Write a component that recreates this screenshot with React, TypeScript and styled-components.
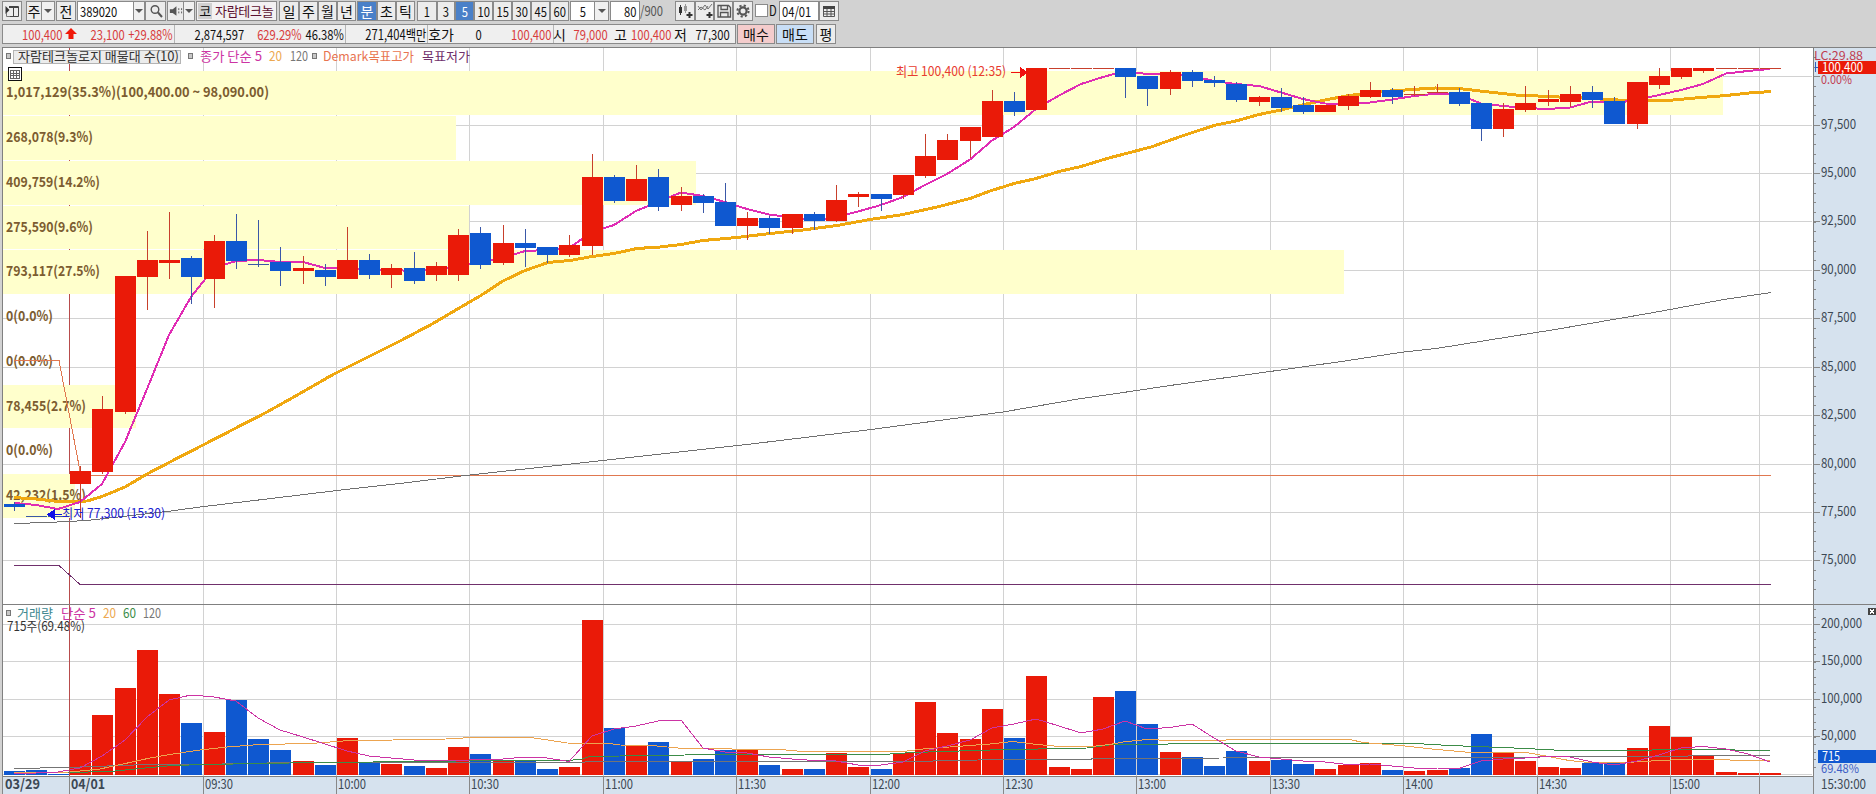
import React from 'react';
import styled, { createGlobalStyle } from 'styled-components';

const fontStack = `'Noto Sans CJK KR', 'Liberation Sans', sans-serif`;

const RED = '#ea1a08';
const BLUE = '#0f58d0';

const GlobalStyle = createGlobalStyle`
  html, body {
    margin: 0;
    padding: 0;
    overflow: hidden;
    background: #d2d2d2;
  }

  * {
    box-sizing: border-box;
  }
`;

const Page = styled.div`
  width: 1876px;
  height: 794px;
  padding-left: 2px;

  display: flex;
  flex-direction: column;

  background: #d2d2d2;
  font-family: ${fontStack};
  font-size: 14px;
  line-height: 18px;
  color: #111;
`;

const Toolbar = styled.div`
  height: 20px;
  margin-top: 1px;

  display: flex;
  align-items: stretch;
`;

const QuoteBar = styled.div`
  height: 20px;
  margin: 3px 0;

  display: flex;
  align-items: stretch;
`;

const Button = styled.div<{ $w: number; $gap?: number; $active?: boolean; $bg?: string }>`
  width: ${p => p.$w}px;
  margin-left: ${p => p.$gap ?? 0}px;

  display: flex;
  flex: none;
  align-items: center;
  justify-content: center;
  white-space: nowrap;

  border: 1px solid #8a8a8a;
  background: ${p => (p.$active ? '#4a80c8' : p.$bg || '#ececec')};
  color: ${p => (p.$active ? '#fff' : '#111')};

  & + & {
    border-left-width: ${p => (p.$gap ? 1 : 0)}px;
  }
`;

// Condensed digits.
const Num = styled.span<{ $origin?: string }>`
  display: inline-block;
  transform: scaleX(0.8);
  transform-origin: ${p => p.$origin || 'center'};
`;

const Input = styled.div<{ $w: number; $gap?: number; $align?: string }>`
  width: ${p => p.$w}px;
  margin-left: ${p => p.$gap ?? 0}px;
  padding: 0 2px;

  display: flex;
  flex: none;
  justify-content: ${p => p.$align || 'flex-start'};
  white-space: nowrap;

  border: 1px solid #8a8a8a;
  background: #fff;
`;

const Arrow = styled.div<{ $w: number }>`
  width: ${p => p.$w}px;

  display: flex;
  flex: none;
  align-items: center;
  justify-content: center;

  border: 1px solid #8a8a8a;
  border-left: none;
  background: #f0f0f0;

  &::after {
    content: '';
    border: 4px solid transparent;
    border-top: 4px solid #555;
    border-bottom: none;
  }
`;

const StockName = styled.div`
  width: 81px;
  margin-left: 1px;
  padding: 0 1px;

  display: flex;
  flex: none;
  align-items: center;
  white-space: nowrap;

  border: 1px solid #8a8a8a;
  background: #f3f1f2;
  color: #5c1030;
  font-size: 13px;
  letter-spacing: -0.3px;
`;

const Market = styled.span`
  width: 14px;
  height: 16px;
  margin-right: 3px;
  line-height: 16px;
  text-align: center;

  background: #d0d0d0;
  color: #111;
`;

const Total = styled.div`
  width: 35px;
  flex: none;
  color: #555;
`;

const CheckBox = styled.div`
  width: 13px;
  height: 13px;
  margin: 3px 1px 0 2px;

  flex: none;
  border: 1px solid #8a8a8a;
  background: #fff;
`;

const CheckLabel = styled.div`
  width: 10px;
  flex: none;
`;

const Quotes = styled.div`
  width: 734px;

  display: flex;
  flex: none;

  border: 1px solid #8a8a8a;
  background: #efefef;
`;

const Quote = styled.div<{ $w: number; $color?: string; $divider?: boolean }>`
  width: ${p => p.$w}px;
  padding-right: ${p => (p.$divider ? 1 : 0)}px;

  display: flex;
  flex: none;
  justify-content: flex-end;
  white-space: nowrap;

  border-right: 1px solid ${p => (p.$divider ? '#b5b5b5' : 'transparent')};
  color: ${p => p.$color || '#111'};
`;

const Workspace = styled.div`
  height: 747px;

  display: grid;
  grid-template-columns: 1811px 63px;
  grid-template-rows: 557px 172px 18px;

  svg {
    display: block;
  }
`;

const ChartText = styled.text<{ $bold?: boolean; $size?: number }>`
  font-family: ${fontStack};
  font-size: ${p => p.$size || 14}px;
  font-weight: ${p => (p.$bold ? 700 : 400)};
  white-space: pre;
`;

// [body top, body bottom, high, low, up, volume top]
type Bar = [number, number, number, number, number, number];

const bars: Bar[] = [
  [504, 507, 502, 511, 0, 771], [516, 517, 516, 517, 0, 770], [516, 517, 516, 517, 0, 774],
  [471, 484, 466, 518, 1, 750], [409, 472, 396, 474, 1, 715], [276, 412, 276, 414, 1, 688],
  [260, 277, 231, 310, 1, 650], [260, 263, 212, 279, 1, 694], [258, 277, 256, 304, 0, 723],
  [241, 279, 235, 308, 1, 732], [241, 261, 214, 269, 0, 700], [264, 265, 220, 267, 0, 739],
  [262, 271, 247, 286, 0, 750], [268, 271, 256, 284, 1, 761], [270, 277, 264, 286, 0, 765],
  [260, 279, 227, 279, 1, 738], [260, 275, 254, 279, 0, 762], [268, 275, 264, 288, 1, 764],
  [268, 281, 252, 284, 0, 766], [266, 275, 262, 281, 1, 768], [235, 275, 229, 281, 1, 747],
  [233, 265, 227, 269, 0, 754], [243, 263, 225, 265, 1, 760], [243, 248, 229, 267, 0, 761],
  [247, 255, 247, 263, 0, 769], [245, 255, 235, 257, 1, 767], [177, 246, 154, 255, 1, 620],
  [177, 201, 175, 203, 0, 728], [179, 201, 165, 201, 1, 746], [177, 207, 169, 211, 0, 742],
  [196, 205, 187, 211, 1, 762], [196, 203, 194, 213, 0, 759], [202, 226, 183, 226, 0, 750],
  [218, 226, 212, 240, 1, 750], [218, 228, 216, 234, 0, 765], [214, 228, 214, 234, 1, 769],
  [214, 221, 212, 230, 0, 769], [200, 221, 185, 222, 1, 753], [194, 197, 192, 207, 1, 767],
  [194, 199, 194, 211, 0, 769], [175, 195, 175, 199, 1, 753], [156, 176, 134, 178, 1, 702],
  [140, 160, 134, 160, 1, 733], [127, 141, 127, 158, 1, 739], [101, 137, 90, 137, 1, 709],
  [101, 112, 92, 116, 0, 738], [68, 110, 68, 110, 1, 676], [68, 69, 68, 69, 1, 767],
  [68, 69, 68, 69, 1, 769], [68, 69, 68, 69, 1, 697], [68, 77, 68, 98, 0, 691],
  [76, 89, 76, 106, 0, 724], [72, 89, 70, 95, 1, 752], [72, 81, 70, 87, 0, 757],
  [80, 83, 76, 87, 0, 766], [84, 100, 82, 102, 0, 751], [97, 102, 96, 106, 1, 761],
  [97, 108, 88, 112, 0, 760], [105, 112, 97, 114, 0, 764], [105, 112, 105, 112, 1, 769],
  [96, 106, 94, 110, 1, 765], [90, 97, 82, 98, 1, 763], [90, 97, 88, 104, 0, 770],
  [94, 95, 86, 96, 1, 771], [92, 93, 84, 93, 1, 770], [92, 104, 88, 106, 0, 768],
  [103, 129, 103, 141, 0, 734], [109, 129, 103, 137, 1, 752], [103, 110, 86, 112, 1, 761],
  [99, 102, 90, 106, 1, 767], [94, 102, 86, 107, 1, 768], [92, 100, 86, 108, 0, 763],
  [101, 124, 97, 124, 0, 763], [82, 124, 82, 129, 1, 748], [76, 85, 68, 89, 1, 726],
  [68, 77, 68, 79, 1, 737], [68, 71, 68, 73, 1, 756], [68, 69, 68, 69, 1, 772],
  [68, 69, 68, 69, 1, 773], [68, 69, 68, 69, 1, 773],
];

const barLeft = (i: number) => Math.floor(4 + i * 22.235);

// One y per bar.
const priceMa5 = [
  503, 505, 509, 502, 484, 442, 389, 335, 297, 268, 261, 260, 262, 262, 268, 268, 270, 270, 271, 270,
  266, 262, 258, 251, 250, 248, 232, 225, 211, 202, 192.5, 196, 202, 209, 214.5, 217.5, 220.5, 217, 211.5, 205,
  197, 185, 174, 159.5, 140.5, 127, 109, 95.5, 84, 77, 71, 74, 74.5, 76, 81, 84, 86, 92.5, 99, 103.5,
  104, 102.5, 99.5, 96, 93.5, 94.5, 103.5, 106, 108, 109, 107.5, 101.5, 103, 100, 95, 90, 84, 73.5, 71, 69,
];

const volumeMa5 = [
  773, 773, 772, 768, 756, 740, 717, 700, 695, 697, 701, 718, 730, 737, 744, 751, 756, 758, 760, 760,
  761, 759, 759, 757, 758, 761.5, 736, 729, 726, 721, 720, 748, 752, 753, 757, 759, 760.5, 761, 765, 765,
  762, 751, 746, 740, 728, 724, 719, 726, 733, 729, 721, 729, 727.5, 724, 738, 751, 757, 759, 761, 762,
  764.5, 764, 766, 768, 768, 768.5, 761, 759, 758, 756.5, 757, 762, 765, 761, 755, 748, 746.5, 749, 754, 762,
];

const perBar = (ys: number[]) => ys.map((y, i) => `${barLeft(i) + 10},${y}`).join(' ');

const priceMa20 =
  '14,497.5 36,499 58,501.5 87,501 102,496.5 125,487 147,474 170,462 204,444.5 233,429.5 267,412 300,393.5 333,374.5 367,357.5 400,341 ' +
  '433,323.5 455,310.5 480,296 490,289.5 503,281 525,270.5 548,262.5 570,260.5 592,256.5 614,253.5 637,248.5 660,247 681,244.5 ' +
  '703,240.5 737,237.5 770,233.5 803,230 837,225.5 870,219.5 903,214.5 937,207 970,198.5 990,191 1014,183.5 1036,178.5 1059,171.5 ' +
  '1081,166.5 1107,158.5 1151,147 1182,136 1214,125.5 1238,120.5 1259,114.5 1281,110 1304,104.5 1325,100 1348,95.7 1380,91.7 ' +
  '1412,89.5 1435,88 1459,88.5 1493,92.5 1516,95 1538,96 1559,97 1582,98 1609,99.5 1626,100.5 1668,100.5 1689,98.5 1726,95.5 1749,93 1771,91.5';

const priceMa120 =
  '14,523.5 47,522.5 87,520.5 167,511.5 204,506.5 267,499 337,490.5 400,483.5 465,475.5 603,460.5 670,453 751,444 871,429.5 ' +
  '1003,412 1080,398.7 1137,390.5 1170,385.5 1270,371.5 1345,361 1400,352.5 1436,348.5 1555,329.5 1651,313 1724,299.5 1771,292.5';

const volumeMa20 =
  '14,772.5 70,772 100,769 123,764 150,758 173,754 200,750 227,747 253,745 317,743 350,740.5 437,739.5 480,737 527,737 548,740 ' +
  '567,743 610,743.5 620,745 657,746 683,748.5 780,749.5 797,751 907,751 923,749 963,746 990,744 1013,741.5 1037,744.5 1060,746.5 ' +
  '1087,747 1110,744.5 1123,742 1147,739.5 1170,740.5 1223,740.5 1230,739.5 1350,739.5 1363,742.5 1400,745.5 1437,749.5 1470,752.5 ' +
  '1529,753 1546,756 1569,760.5 1589,762.5 1626,762.5 1659,760.5 1683,759.5 1716,759.5 1743,760.5 1770,760.5';

const volumeMa60 =
  '14,772.5 67,772.5 110,771.5 140,768.5 167,766 200,764.5 267,763.5 313,762.5 433,761.5 480,760.5 567,760.5 580,759.5 590,756.5 ' +
  '650,755.5 720,754.5 883,754.5 913,752.5 990,750 1087,748 1113,744.5 1223,743.5 1360,743.5 1420,743.8 1450,745.5 1476,746.5 ' +
  '1526,748.5 1563,750.5 1649,750.5 1656,749.5 1726,749.5 1743,750.5 1770,750.5';

const volumeMa120 =
  '14,768.5 67,767.5 140,764.8 200,764.5 267,763 480,762.5 580,762.5 590,761.5 913,761.5 953,760.5 1003,759.5 1090,759.5 1093,758.5 ' +
  '1223,758 1227,757.5 1536,757.5 1540,756.5 1686,756.5 1690,755.5 1770,755.5';

const profile = [
  { top: 71, bottom: 115, right: 1723, text: '1,017,129(35.3%)(100,400.00 ~ 98,090.00)', w: 263, y: 92 },
  { top: 116, bottom: 160, right: 456, text: '268,078(9.3%)', w: 87, y: 137 },
  { top: 161, bottom: 205, right: 696, text: '409,759(14.2%)', w: 94, y: 182 },
  { top: 206, bottom: 249, right: 469, text: '275,590(9.6%)', w: 87, y: 227 },
  { top: 250, bottom: 294, right: 1344, text: '793,117(27.5%)', w: 94, y: 271 },
  { top: 295, bottom: 339, right: 3, text: '0(0.0%)', w: 47, y: 316 },
  { top: 340, bottom: 384, right: 3, text: '0(0.0%)', w: 47, y: 361 },
  { top: 385, bottom: 428, right: 136, text: '78,455(2.7%)', w: 80, y: 406 },
  { top: 429, bottom: 473, right: 3, text: '0(0.0%)', w: 47, y: 450 },
  { top: 474, bottom: 518, right: 75, text: '42,232(1.5%)', w: 80, y: 495 },
];

const priceLevels = [
  { y: 76, text: '' },
  { y: 125, text: '97,500' },
  { y: 173, text: '95,000' },
  { y: 221, text: '92,500' },
  { y: 270, text: '90,000' },
  { y: 318, text: '87,500' },
  { y: 367, text: '85,000' },
  { y: 415, text: '82,500' },
  { y: 464, text: '80,000' },
  { y: 512, text: '77,500' },
  { y: 560, text: '75,000' },
];

const volumeLevels = [
  { y: 624, text: '200,000' },
  { y: 661, text: '150,000' },
  { y: 699, text: '100,000' },
  { y: 736, text: '50,000' },
  { y: 774, text: '' },
];

const times = ['09:30', '10:00', '10:30', '11:00', '11:30', '12:00', '12:30', '13:00', '13:30', '14:00', '14:30', '15:00'];
const timeX = times.map((_, n) => barLeft(9 + n * 6) - 1);
const verticals = [...timeX, 1759];

interface LabelProps {
  x: number;
  y: number;
  w: number;
  fill: string;
  bold?: boolean;
  size?: number;
  children: string;
}

// Text centred vertically on y and fitted to w.
function Label({ x, y, w, fill, bold, size, children }: LabelProps) {
  return (
    <ChartText
      x={x}
      y={y + 5}
      fill={fill}
      textLength={w}
      lengthAdjust="spacingAndGlyphs"
      $bold={bold}
      $size={size}
    >
      {children}
    </ChartText>
  );
}

function Marker({ x, y }: { x: number; y: number }) {
  return <rect x={x + 0.5} y={y + 0.5} width={4} height={5} fill="#c8c8c8" stroke="#777" />;
}

function Line({ points, color, width = 1 }: { points: string; color: string; width?: number }) {
  return <polyline points={points} fill="none" stroke={color} strokeWidth={width} />;
}

function Candle({ bar, index }: { bar: Bar; index: number }) {
  const [top, bottom, high, low, up] = bar;
  const x = barLeft(index);
  const thin = bottom - top === 1;
  const wick = up ? '#c8402c' : '#3a58a8';

  return (
    <g>
      {low - high > 1 && <rect x={x + 10} y={high} width={1} height={low - high} fill={wick} />}
      <rect x={x} y={top} width={21} height={bottom - top} fill={thin ? wick : up ? RED : BLUE} />
    </g>
  );
}

function PricePane() {
  return (
    <svg width={1811} height={557} viewBox="2 47 1811 557" shapeRendering="crispEdges">
      <rect x={2} y={47} width={1811} height={557} fill="#fff" />
      {priceLevels.map(l => <rect key={l.y} x={3} y={l.y} width={1809} height={1} fill="#d2d2d2" />)}
      {verticals.map(x => <rect key={x} x={x} y={48} width={1} height={556} fill="#d2d2d2" />)}
      <rect x={69} y={48} width={1} height={556} fill="#b84c4c" />
      {profile.map(b => (
        <rect key={b.top} x={3} y={b.top} width={b.right - 3} height={b.bottom - b.top} fill="#ffffcc" />
      ))}
      <rect x={2} y={47} width={1811} height={1} fill="#808080" />
      <rect x={2} y={47} width={1} height={557} fill="#808080" />

      {profile.map(b => (
        <Label key={b.top} x={6} y={b.y} w={b.w} fill="#7c5c30" size={14} bold>{b.text}</Label>
      ))}

      <Line points="14,565.5 59,565.5 80,584.5 1771,584.5" color="#70306c" />
      <Line points="14,360.5 59,360.5 80,471" color="#e07850" />
      <Line points="91,475.5 1771,475.5" color="#e07850" />
      <Line points={priceMa120} color="#707070" />
      <Line points={priceMa20} color="#f0a810" width={3} />
      <Line points={perBar(priceMa5)} color="#e02cb4" width={2} />
      {bars.map((bar, i) => <Candle key={i} bar={bar} index={i} />)}

      <Label x={896} y={71} w={110} fill="#e83c30" size={13}>최고 100,400 (12:35)</Label>
      <path d="M1011 72.5H1022" stroke="#f01010" />
      <path d="M1020 67L1028 72.5L1020 78Z" fill="#f01010" />
      <Label x={62} y={513} w={103} fill="#2020d0" size={13}>최저 77,300 (15:30)</Label>
      <path d="M52 514.5H62" stroke="#1010e8" />
      <path d="M55 509L47 514.5L55 520Z" fill="#1010e8" />

      <Marker x={6} y={53} />
      <rect x={13.5} y={50.5} width={167} height={13} fill="#ececec" stroke="#b4b4b4" />
      <Label x={18} y={56} w={161} fill="#333" size={13}>자람테크놀로지 매물대 수(10)</Label>
      <Marker x={188} y={53} />
      <Label x={200} y={56} w={62} fill="#cc34a4" size={13}>종가 단순 5</Label>
      <Label x={269} y={56} w={13} fill="#eca850">20</Label>
      <Label x={290} y={56} w={18} fill="#777">120</Label>
      <Marker x={312} y={53} />
      <Label x={323} y={56} w={91} fill="#e87450" size={13}>Demark목표고가</Label>
      <Label x={422} y={56} w={48} fill="#70306c" size={13}>목표저가</Label>

      <rect x={8.5} y={67.5} width={13} height={13} fill="#fff" stroke="#111" />
      <path d="M10.5 70.5H19.5V78.5H10.5ZM10.5 73.5H19.5M10.5 75.5H19.5M13.5 70V78M16.5 70V78" fill="none" stroke="#666" />
    </svg>
  );
}

function VolumePane() {
  return (
    <svg width={1811} height={172} viewBox="2 604 1811 172" shapeRendering="crispEdges">
      <rect x={2} y={604} width={1811} height={172} fill="#fff" />
      {volumeLevels.map(l => <rect key={l.y} x={3} y={l.y} width={1809} height={1} fill="#d2d2d2" />)}
      {verticals.map(x => <rect key={x} x={x} y={604} width={1} height={172} fill="#d2d2d2" />)}
      <rect x={2} y={604} width={1811} height={1} fill="#808080" />
      <rect x={2} y={604} width={1} height={172} fill="#808080" />

      {bars.map((bar, i) => (
        <rect key={i} x={barLeft(i)} y={bar[5]} width={21} height={775 - bar[5]} fill={bar[4] ? RED : BLUE} />
      ))}
      <Line points={volumeMa120} color="#747474" />
      <Line points={volumeMa60} color="#3c8c48" />
      <Line points={volumeMa20} color="#eca450" />
      <Line points={perBar(volumeMa5)} color="#cc34a4" />

      <Marker x={6} y={610} />
      <Label x={17} y={613} w={36} fill="#408890" size={13}>거래량</Label>
      <Label x={61} y={613} w={35} fill="#cc34a4" size={13}>단순 5</Label>
      <Label x={103} y={613} w={13} fill="#eca850">20</Label>
      <Label x={123} y={613} w={13} fill="#3c8c48">60</Label>
      <Label x={143} y={613} w={18} fill="#777">120</Label>
      <Label x={7} y={626} w={78} fill="#333" size={13}>715주(69.48%)</Label>
      <rect x={69} y={605} width={1} height={171} fill="#b84c4c" />
    </svg>
  );
}

function PriceAxis() {
  return (
    <svg width={63} height={557} viewBox="1813 47 63 557" shapeRendering="crispEdges">
      <rect x={1813} y={47} width={63} height={557} fill="#d6e2ee" />
      <rect x={1813} y={47} width={63} height={1} fill="#808080" />
      <rect x={1813} y={47} width={1} height={557} fill="#808080" />
      {Array.from({ length: 56 }, (_, n) => (
        <rect key={n} x={1814} y={Math.round(57 + n * 9.68)} width={2} height={1} fill="#888" />
      ))}
      {priceLevels.map(l => (
        <g key={l.y}>
          <rect x={1814} y={l.y} width={6} height={1} fill="#888" />
          {l.text && <Label x={1821} y={l.y - 1} w={35} fill="#3c4854">{l.text}</Label>}
        </g>
      ))}
      <Label x={1814} y={55} w={49} fill="#c03c50" size={12}>LC:29.88</Label>
      <path d="M1815.5 62V72M1815 67.5H1818" stroke="#3060c0" fill="none" />
      <rect x={1818} y={61} width={58} height={13} fill={RED} />
      <Label x={1822} y={67} w={41} fill="#fff" size={13}>100,400</Label>
      <Label x={1821} y={79} w={31} fill="#c03c50" size={12}>0.00%</Label>
    </svg>
  );
}

function VolumeAxis() {
  return (
    <svg width={63} height={172} viewBox="1813 604 63 172" shapeRendering="crispEdges">
      <rect x={1813} y={604} width={63} height={172} fill="#d6e2ee" />
      <rect x={1813} y={604} width={63} height={1} fill="#808080" />
      <rect x={1813} y={604} width={1} height={172} fill="#808080" />
      {Array.from({ length: 22 }, (_, n) => (
        <rect key={n} x={1814} y={Math.round(609 + n * 7.5)} width={2} height={1} fill="#888" />
      ))}
      {volumeLevels.map(l => (
        <g key={l.y}>
          {l.text && <rect x={1814} y={l.y} width={6} height={1} fill="#888" />}
          {l.text && <Label x={1821} y={l.y - 1} w={l.text.length > 6 ? 41 : 35} fill="#3c4854">{l.text}</Label>}
        </g>
      ))}
      <rect x={1868} y={608} width={8} height={7} fill="#444" />
      <path d="M1870 609.5L1874 613.5M1874 609.5L1870 613.5" stroke="#fff" />
      <rect x={1818} y={750} width={58} height={13} fill={BLUE} />
      <Label x={1822} y={756} w={18} fill="#fff" size={13}>715</Label>
      <Label x={1821} y={768} w={38} fill="#3c5cc4" size={12}>69.48%</Label>
    </svg>
  );
}

function TimeAxis() {
  return (
    <svg width={1811} height={18} viewBox="2 776 1811 18" shapeRendering="crispEdges">
      <rect x={2} y={776} width={1811} height={18} fill="#d6e2ee" />
      <rect x={2} y={776} width={1811} height={1} fill="#808080" />
      {[2, 69, ...verticals].map(x => <rect key={x} x={x} y={776} width={1} height={18} fill="#888" />)}
      <Label x={5} y={784} w={35} fill="#3c4854" bold>03/29</Label>
      <Label x={71} y={784} w={34} fill="#3c4854" bold>04/01</Label>
      {times.map((t, n) => <Label key={t} x={timeX[n] + 2} y={784} w={28} fill="#3c4854">{t}</Label>)}
    </svg>
  );
}

function Clock() {
  return (
    <svg width={63} height={18} viewBox="1813 776 63 18" shapeRendering="crispEdges">
      <rect x={1813} y={776} width={63} height={18} fill="#d6e2ee" />
      <rect x={1813} y={776} width={1} height={18} fill="#888" />
      <Label x={1821} y={784} w={45} fill="#3c4854">15:30:00</Label>
    </svg>
  );
}

interface AmountProps {
  w: number;
  red?: boolean;
  divider?: boolean;
  children: string;
}

function Amount({ w, red, divider, children }: AmountProps) {
  return (
    <Quote $w={w} $color={red ? '#d83c3c' : undefined} $divider={divider}>
      <Num $origin="right">{children}</Num>
    </Quote>
  );
}

const icon = { width: 16, height: 16, viewBox: '0 0 16 16', fill: 'none', stroke: '#555' };

function App() {
  return (
    <>
      <GlobalStyle />
      <Page>
        <Toolbar>
          <Button $w={20}>
            <svg {...icon}>
              <path d="M5 3.5H14.5V13.5H5M9.5 3V13M5 4.5H14" stroke="#444" />
              <path d="M1.5 3V11L5.5 7Z" fill="#333" stroke="none" />
              <path d="M2.5 10V13.5H6" stroke="#777" />
            </svg>
          </Button>
          <Button $w={16} $gap={4}>주</Button>
          <Arrow $w={13} />
          <Button $w={20} $gap={1}>전</Button>
          <Input $w={57} $gap={1}><Num $origin="left">389020</Num></Input>
          <Arrow $w={11} />
          <Button $w={21}>
            <svg {...icon} strokeWidth={1.4}>
              <circle cx={7} cy={6.5} r={3.8} />
              <path d="M10 9.5L14 14" strokeWidth={2} />
            </svg>
          </Button>
          <Button $w={17} $gap={1}>
            <svg {...icon}>
              <path d="M2 6H5L9 3V13L5 10H2Z" fill="#555" stroke="none" />
              <path d="M11.5 5V11M14.5 5V11" strokeDasharray="2 1.5" />
            </svg>
          </Button>
          <Arrow $w={11} />
          <StockName><Market>코</Market>자람테크놀</StockName>

          <Button $w={20} $gap={2}>일</Button>
          <Button $w={19}>주</Button>
          <Button $w={19}>월</Button>
          <Button $w={19}>년</Button>

          <Button $w={20} $gap={1} $active>분</Button>
          <Button $w={19}>초</Button>
          <Button $w={19}>틱</Button>

          <Button $w={20} $gap={2}><Num>1</Num></Button>
          <Button $w={18}><Num>3</Num></Button>
          <Button $w={19} $active><Num>5</Num></Button>
          <Button $w={19}><Num>10</Num></Button>
          <Button $w={19}><Num>15</Num></Button>
          <Button $w={19}><Num>30</Num></Button>
          <Button $w={19}><Num>45</Num></Button>
          <Button $w={19}><Num>60</Num></Button>

          <Input $w={25} $gap={1} $align="center"><Num>5</Num></Input>
          <Arrow $w={14} />
          <Input $w={30} $gap={1} $align="flex-end"><Num $origin="right">80</Num></Input>
          <Total><Num $origin="left">/900</Num></Total>

          <Button $w={20}>
            <svg {...icon}>
              <path d="M2 4H5V10H2ZM3 2H4V12H3Z" fill="#333" stroke="none" />
              <path d="M7 3H10V8H7ZM8 1H9V10H8Z" fill="#999" stroke="none" />
              <path d="M12.5 9V15M9.5 12H15.5" stroke="#333" strokeWidth={2} />
            </svg>
          </Button>
          <Button $w={19}>
            <svg {...icon}>
              <path d="M1 3L4 7L8 2L11 6L15 1M1 7L4 4L8 7L11 3" strokeWidth={0.8} />
              <path d="M12.5 9V15M9.5 12H15.5" stroke="#333" strokeWidth={2} />
            </svg>
          </Button>
          <Button $w={19}>
            <svg {...icon}>
              <path d="M2 2.5H12.5L14.5 4.5V14H2ZM5 2.5V6.5H11.5V2.5M4.5 14V9.5H12V14" strokeWidth={1.3} />
            </svg>
          </Button>
          <Button $w={20}>
            <svg {...icon}>
              <circle cx={8} cy={8} r={3.6} strokeWidth={2.2} />
              <circle cx={8} cy={8} r={5.6} strokeWidth={2} strokeDasharray="2.2 2.2" />
            </svg>
          </Button>
          <CheckBox />
          <CheckLabel><Num $origin="left">D</Num></CheckLabel>
          <Input $w={40}><Num $origin="left">04/01</Num></Input>
          <Button $w={20}>
            <svg {...icon}>
              <path d="M2.5 4.5H13.5V13.5H2.5ZM2 8.5H14M2 11H14M6 5V13M10 5V13" />
              <path d="M2 3H14V6H2Z" fill="#444" stroke="none" />
            </svg>
          </Button>
        </Toolbar>

        <QuoteBar>
          <Quotes>
            <Amount w={61} red>100,400</Amount>
            <svg width={14} height={18} viewBox="0 0 14 18">
              <path d="M7 3L13 9H9.5V14H4.5V9H1Z" fill="#f01808" />
            </svg>
            <Amount w={48} red>23,100</Amount>
            <Amount w={49} red divider>+29.88%</Amount>
            <Amount w={70}>2,874,597</Amount>
            <Amount w={58} red>629.29%</Amount>
            <Amount w={43} divider>46.38%</Amount>
            <Amount w={82} divider>271,404백만</Amount>
            <Quote $w={27}>호가</Quote>
            <Amount w={28}>0</Amount>
            <Amount w={71} red divider>100,400</Amount>
            <Quote $w={13}>시</Quote>
            <Amount w={42} red>79,000</Amount>
            <Quote $w={19}>고</Quote>
            <Amount w={45} red>100,400</Amount>
            <Quote $w={15}>저</Quote>
            <Amount w={43}>77,300</Amount>
          </Quotes>
          <Button $w={38} $gap={1} $bg="#f4cccc">매수</Button>
          <Button $w={38} $gap={1} $bg="#c8def6">매도</Button>
          <Button $w={20} $gap={2}>평</Button>
        </QuoteBar>

        <Workspace>
          <PricePane />
          <PriceAxis />
          <VolumePane />
          <VolumeAxis />
          <TimeAxis />
          <Clock />
        </Workspace>
      </Page>
    </>
  );
}

export default App;
